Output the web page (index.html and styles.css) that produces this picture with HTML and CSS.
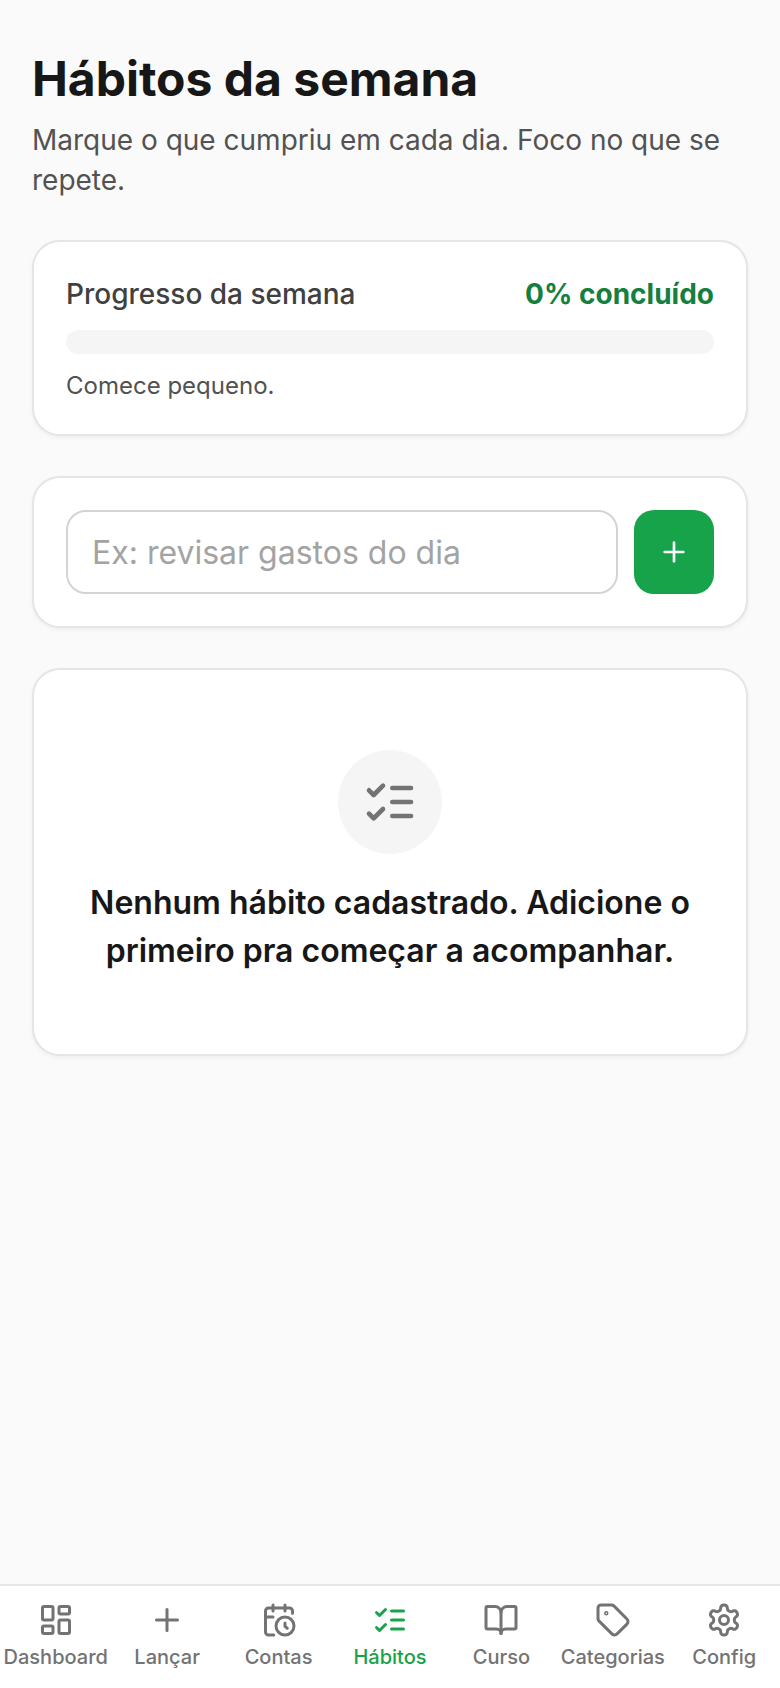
FILE: index.html
```html
<!DOCTYPE html>
<html lang="pt-BR">
<head>
    <meta charset="UTF-8">
    <meta name="viewport" content="width=device-width, initial-scale=1.0">
    <title>Hábitos da semana</title>
    <link rel="stylesheet" href="styles.css">
</head>
<body>
    <div class="page">
        <main class="content">
            <!-- Header -->
            <div class="page_head">
                <h1>Hábitos da semana</h1>
                <p>Marque o que cumpriu em cada dia. Foco no que se repete.</p>
            </div>

            <!-- Week progress -->
            <section class="card progress_card">
                <div class="progress_top">
                    <span class="progress_label">Progresso da semana</span>
                    <span class="progress_value">0% concluído</span>
                </div>
                <div class="progress_bar"></div>
                <p class="progress_hint">Comece pequeno.</p>
            </section>

            <!-- New habit -->
            <section class="card add_card">
                <input class="habit_input" type="text" placeholder="Ex: revisar gastos do dia">
                <button class="add_btn" type="button" aria-label="Adicionar">
                    <svg viewBox="0 0 24 24"><path d="M5 12h14"/><path d="M12 5v14"/></svg>
                </button>
            </section>

            <!-- Empty list -->
            <section class="card empty_card">
                <div class="empty_icon">
                    <svg class="icon_large" viewBox="0 0 24 24"><path d="m3 17 2 2 4-4"/><path d="m3 7 2 2 4-4"/><path d="M13 6h8"/><path d="M13 12h8"/><path d="M13 18h8"/></svg>
                </div>
                <p class="empty_text">Nenhum hábito cadastrado. Adicione o primeiro pra começar a acompanhar.</p>
            </section>
        </main>

        <!-- Bottom nav -->
        <nav class="bottom_nav">
            <a class="nav_item">
                <svg viewBox="0 0 24 24"><rect x="3" y="3" width="7" height="9" rx="1"/><rect x="14" y="3" width="7" height="5" rx="1"/><rect x="14" y="12" width="7" height="9" rx="1"/><rect x="3" y="16" width="7" height="5" rx="1"/></svg>
                <span>Dashboard</span>
            </a>
            <a class="nav_item">
                <svg viewBox="0 0 24 24"><path d="M5 12h14"/><path d="M12 5v14"/></svg>
                <span>Lançar</span>
            </a>
            <a class="nav_item">
                <svg viewBox="0 0 24 24"><path d="M21 7.5V6a2 2 0 0 0-2-2H5a2 2 0 0 0-2 2v14a2 2 0 0 0 2 2h3.5"/><path d="M16 2v4"/><path d="M8 2v4"/><path d="M3 10h5"/><path d="M17.5 17.5 16 16.3V14"/><circle cx="16" cy="16" r="6"/></svg>
                <span>Contas</span>
            </a>
            <a class="nav_item active">
                <svg viewBox="0 0 24 24"><path d="m3 17 2 2 4-4"/><path d="m3 7 2 2 4-4"/><path d="M13 6h8"/><path d="M13 12h8"/><path d="M13 18h8"/></svg>
                <span>Hábitos</span>
            </a>
            <a class="nav_item">
                <svg viewBox="0 0 24 24"><path d="M12 7v14"/><path d="M3 18a1 1 0 0 1-1-1V4a1 1 0 0 1 1-1h5a4 4 0 0 1 4 4 4 4 0 0 1 4-4h5a1 1 0 0 1 1 1v13a1 1 0 0 1-1 1h-6a3 3 0 0 0-3 3 3 3 0 0 0-3-3z"/></svg>
                <span>Curso</span>
            </a>
            <a class="nav_item">
                <svg viewBox="0 0 24 24"><path d="M12.586 2.586A2 2 0 0 0 11.172 2H4a2 2 0 0 0-2 2v7.172a2 2 0 0 0 .586 1.414l8.704 8.704a2.426 2.426 0 0 0 3.42 0l6.58-6.58a2.426 2.426 0 0 0 0-3.42z"/><circle cx="7.5" cy="7.5" r=".5"/></svg>
                <span>Categorias</span>
            </a>
            <a class="nav_item">
                <svg viewBox="0 0 24 24"><path d="M12.22 2h-.44a2 2 0 0 0-2 2v.18a2 2 0 0 1-1 1.73l-.43.25a2 2 0 0 1-2 0l-.15-.08a2 2 0 0 0-2.73.73l-.22.38a2 2 0 0 0 .73 2.73l.15.1a2 2 0 0 1 1 1.72v.51a2 2 0 0 1-1 1.74l-.15.09a2 2 0 0 0-.73 2.73l.22.38a2 2 0 0 0 2.73.73l.15-.08a2 2 0 0 1 2 0l.43.25a2 2 0 0 1 1 1.73V20a2 2 0 0 0 2 2h.44a2 2 0 0 0 2-2v-.18a2 2 0 0 1 1-1.73l.43-.25a2 2 0 0 1 2 0l.15.08a2 2 0 0 0 2.73-.73l.22-.39a2 2 0 0 0-.73-2.73l-.15-.08a2 2 0 0 1-1-1.74v-.5a2 2 0 0 1 1-1.74l.15-.09a2 2 0 0 0 .73-2.73l-.22-.38a2 2 0 0 0-2.73-.73l-.15.08a2 2 0 0 1-2 0l-.43-.25a2 2 0 0 1-1-1.73V4a2 2 0 0 0-2-2z"/><circle cx="12" cy="12" r="3"/></svg>
                <span>Config</span>
            </a>
        </nav>
    </div>
</body>
</html>
```

FILE: styles.css
```css
*{
    margin: 0;
    padding: 0;
    box-sizing: border-box;
}
body{
    background-color: #fafafa;
    font-family: Inter, "Liberation Sans", sans-serif;
    color: #171717;
}
svg{
    fill: none;
    stroke: currentColor;
    stroke-width: 2;
    stroke-linecap: round;
    stroke-linejoin: round;
}
.page{
    display: flex;
    flex-direction: column;
    height: 1688px;
}
.content{
    flex: 1;
    display: flex;
    flex-direction: column;
    gap: 40px;
    padding: 49px 32px 0;
}
.page_head h1{
    font-size: 48px;
    line-height: 60px;
    font-weight: 700;
}
.page_head p{
    margin-top: 11px;
    font-size: 28px;
    line-height: 40px;
    color: #525252;
}
.card{
    background-color: #fff;
    border: 2px solid #e5e5e5;
    border-radius: 28px;
    box-shadow: 0 2px 4px rgba(0,0,0,0.05);
    padding: 32px;
}
.progress_top{
    display: flex;
    justify-content: space-between;
    align-items: center;
    line-height: 40px;
}
.progress_label{
    font-size: 28px;
    font-weight: 500;
    color: #404040;
}
.progress_value{
    font-size: 28px;
    font-weight: 700;
    color: #15803d;
}
.progress_bar{
    height: 24px;
    margin-top: 16px;
    border-radius: 12px;
    background-color: #f5f5f5;
}
.progress_hint{
    margin-top: 15px;
    font-size: 24px;
    line-height: 33px;
    color: #525252;
}
.add_card{
    display: flex;
    gap: 16px;
}
.habit_input{
    flex: 1;
    min-width: 0;
    height: 84px;
    padding: 0 24px;
    border: 2px solid #d4d4d4;
    border-radius: 20px;
    font-family: inherit;
    font-size: 32px;
    color: #171717;
    background-color: #fff;
}
.habit_input::placeholder{
    color: #a3a3a3;
}
.add_btn{
    display: flex;
    justify-content: center;
    align-items: center;
    width: 80px;
    height: 84px;
    border: 0;
    border-radius: 20px;
    background-color: #16a34a;
    color: #fff;
}
.add_btn svg{
    width: 32px;
    height: 32px;
}
.empty_card{
    display: flex;
    flex-direction: column;
    align-items: center;
    padding: 80px 48px 79px;
}
.empty_icon{
    display: flex;
    justify-content: center;
    align-items: center;
    width: 104px;
    height: 104px;
    border-radius: 50%;
    background-color: #f5f5f5;
    color: #737373;
}
.icon_large{
    width: 56px;
    height: 56px;
}
.empty_text{
    margin-top: 25px;
    font-size: 32px;
    line-height: 48px;
    font-weight: 600;
    text-align: center;
}
.bottom_nav{
    display: flex;
    height: 104px;
    padding-top: 16px;
    background-color: #fff;
    border-top: 2px solid #e5e5e5;
}
.nav_item{
    flex: 1 1 0;
    display: flex;
    flex-direction: column;
    align-items: center;
    color: #737373;
    font-size: 20px;
    font-weight: 500;
    line-height: 28px;
    gap: 5px;
}
.nav_item svg{
    width: 36px;
    height: 36px;
}
.nav_item.active{
    color: #16a34a;
}
```
